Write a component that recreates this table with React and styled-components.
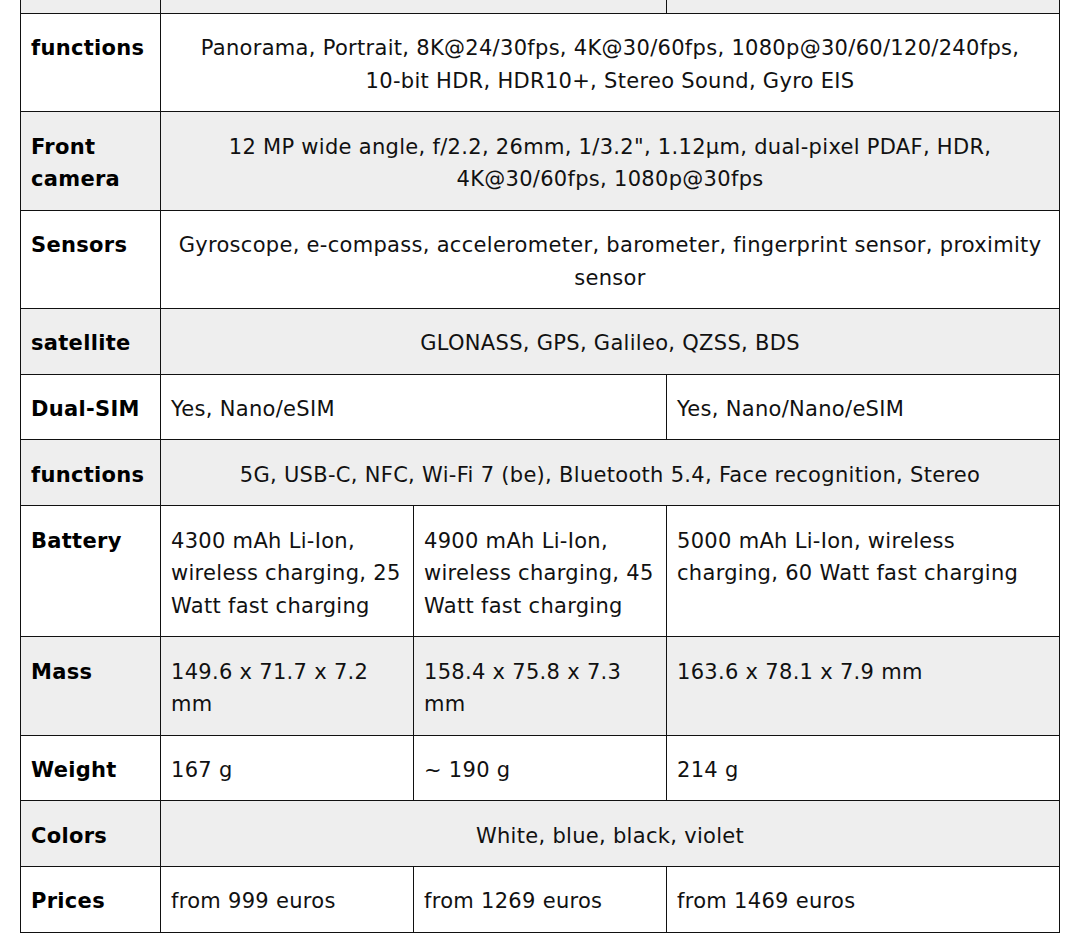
import React from "react";
import styled, { createGlobalStyle } from "styled-components";

const GlobalStyle = createGlobalStyle`
  body {
    margin: 0;
    background: #fff;
    font-family: "DejaVu Sans", Verdana, sans-serif;
    color: #111;
  }
`;

const Page = styled.div`
  padding: 0 12px 0 20px;
  overflow: hidden;
`;

const Table = styled.table`
  width: 1039px;
  margin-top: -53px;
  border-collapse: collapse;
  table-layout: fixed;
  font-size: 21px;
  line-height: 32.7px;
  letter-spacing: 0.3px;
`;

const LabelCol = styled.col`
  width: 140px;
`;

const NarrowCol = styled.col`
  width: 253px;
`;

const WideCol = styled.col`
  width: 393px;
`;

const Row = styled.tr`
  background: ${(p) => (p.$shade ? "#eeeeee" : "#ffffff")};
`;

const Label = styled.th`
  border: 1px solid #111;
  padding: 18.5px 10px 13.5px;
  text-align: left;
  vertical-align: top;
  font-weight: bold;
  color: #000;
`;

const Cell = styled.td`
  border: 1px solid #111;
  padding: 18.5px 10px 13.5px;
  vertical-align: top;
  text-align: ${(p) => (p.$center ? "center" : "left")};
`;

const NoWrap = styled.span`
  white-space: nowrap;
`;

const rows = [
  { label: "", cells: [{ text: "", span: 2 }, { text: "" }] },
  {
    label: "functions",
    cells: [
      {
        text: (
          <>
            Panorama, Portrait, 8K@24/30fps, 4K@30/60fps, 1080p@30/60/120/240fps,{" "}
            <NoWrap>10-bit</NoWrap> HDR, HDR10+, Stereo Sound, Gyro EIS
          </>
        ),
        span: 3,
      },
    ],
  },
  {
    label: "Front camera",
    cells: [
      {
        text: "12 MP wide angle, f/2.2, 26mm, 1/3.2\", 1.12µm, dual-pixel PDAF, HDR, 4K@30/60fps, 1080p@30fps",
        span: 3,
      },
    ],
  },
  {
    label: "Sensors",
    cells: [
      {
        text: "Gyroscope, e-compass, accelerometer, barometer, fingerprint sensor, proximity sensor",
        span: 3,
      },
    ],
  },
  { label: "satellite", cells: [{ text: "GLONASS, GPS, Galileo, QZSS, BDS", span: 3 }] },
  {
    label: "Dual-SIM",
    cells: [{ text: "Yes, Nano/eSIM", span: 2 }, { text: "Yes, Nano/Nano/eSIM" }],
  },
  {
    label: "functions",
    cells: [
      {
        text: "5G, USB-C, NFC, Wi-Fi 7 (be), Bluetooth 5.4, Face recognition, Stereo",
        span: 3,
      },
    ],
  },
  {
    label: "Battery",
    cells: [
      { text: "4300 mAh Li-Ion, wireless charging, 25 Watt fast charging" },
      { text: "4900 mAh Li-Ion, wireless charging, 45 Watt fast charging" },
      { text: "5000 mAh Li-Ion, wireless charging, 60 Watt fast charging" },
    ],
  },
  {
    label: "Mass",
    cells: [
      { text: "149.6 x 71.7 x 7.2 mm" },
      { text: "158.4 x 75.8 x 7.3 mm" },
      { text: "163.6 x 78.1 x 7.9 mm" },
    ],
  },
  { label: "Weight", cells: [{ text: "167 g" }, { text: "~ 190 g" }, { text: "214 g" }] },
  { label: "Colors", cells: [{ text: "White, blue, black, violet", span: 3 }] },
  {
    label: "Prices",
    cells: [{ text: "from 999 euros" }, { text: "from 1269 euros" }, { text: "from 1469 euros" }],
  },
];

const App = () => (
  <>
    <GlobalStyle />
    <Page>
      <Table>
        <colgroup>
          <LabelCol />
          <NarrowCol />
          <NarrowCol />
          <WideCol />
        </colgroup>
        <tbody>
          {rows.map((row, i) => (
            <Row key={i} $shade={i % 2 === 0}>
              <Label>{row.label}</Label>
              {row.cells.map((c, j) => (
                <Cell key={j} colSpan={c.span || 1} $center={c.span === 3}>
                  {c.text || "\u00a0"}
                </Cell>
              ))}
            </Row>
          ))}
        </tbody>
      </Table>
    </Page>
  </>
);

export default App;
